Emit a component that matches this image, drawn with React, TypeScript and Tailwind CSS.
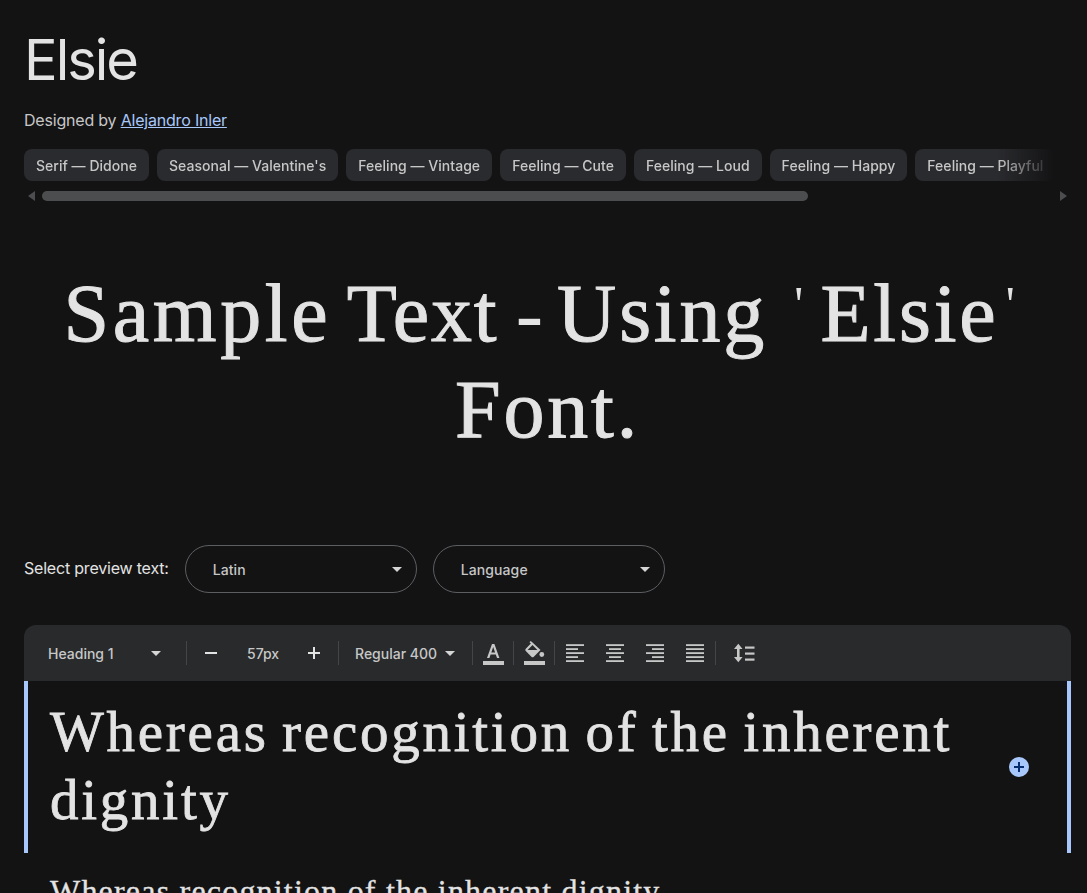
const chips = [
  "Serif — Didone",
  "Seasonal — Valentine's",
  "Feeling — Vintage",
  "Feeling — Cute",
  "Feeling — Loud",
  "Feeling — Happy",
  "Feeling — Playful",
  "Feeling — Calm",
];

const ui = "font-['Inter','Noto_Sans',sans-serif]";
const serif = "font-['Liberation_Serif',serif]";

function Caret({ className = "" }: { className?: string }) {
  return <span className={`h-0 w-0 shrink-0 border-x-[5px] border-t-[5px] border-x-transparent border-t-[#d5d5d5] ${className}`} />;
}

function Divider({ className = "" }: { className?: string }) {
  return <span className={`h-[24px] w-px shrink-0 bg-[#444547] ${className}`} />;
}

function Select({ label }: { label: string }) {
  return (
    <div className="flex h-[48px] w-[232px] items-center justify-between rounded-[24px] border border-[#5c5e61] pl-[27px] pr-[14px] text-[14px] font-medium text-[#c7c7c7]">
      <span className="tracking-[0.1px]">{label}</span>
      <Caret />
    </div>
  );
}

function AlignIcon({ rows }: { rows: [number, number][] }) {
  return (
    <svg width="20" height="20" viewBox="0 0 20 20" className="shrink-0">
      {rows.map(([x, w], i) => (
        <rect key={i} x={x} y={1.2 + i * 4} width={w} height="1.8" fill="#c7c7c7" />
      ))}
    </svg>
  );
}

export default function App() {
  return (
    <div className={`h-[893px] overflow-hidden bg-[#131314] ${ui} text-[#e3e3e3]`}>
      <div className="pl-[24px] pr-[16px] pt-[26px]">
        <h1 className="h-[68px] text-[56px] leading-[68px] font-normal tracking-[-2px]">Elsie</h1>
        <p className="mt-[16px] h-[20px] text-[16px] leading-[20px] tracking-[-0.2px] text-[#c7c7c7]">
          Designed by <a className="text-[#a8c7fa] underline">Alejandro Inler</a>
        </p>

        <div className="mt-[19px] flex h-[32px] gap-[8px] overflow-hidden [mask-image:linear-gradient(to_right,black_93%,transparent_98.5%)]">
          {chips.map((chip) => (
            <span
              key={chip}
              className="flex h-[32px] shrink-0 items-center rounded-[8px] bg-[#2a2b2e] px-[12px] text-[14px] font-medium tracking-[0.03px] whitespace-nowrap text-[#c7c7c7]"
            >
              {chip}
            </span>
          ))}
        </div>

        <div className="mt-[10px] flex h-[10px] items-center">
          <span className="ml-[4px] h-0 w-0 border-y-[5px] border-r-[7px] border-y-transparent border-r-[#4c4d4f]" />
          <span className="ml-[7px] h-[10px] w-[766px] rounded-full bg-[#4c4d4f]" />
          <span className="ml-auto mr-[4px] h-0 w-0 border-y-[5px] border-l-[7px] border-y-transparent border-l-[#4c4d4f]" />
        </div>
      </div>

      <div
        className={`mt-[65px] h-[192px] pl-[24px] pr-[16px] text-center text-[82px] leading-[96px] tracking-[2.8px] [word-spacing:-9px] [-webkit-text-stroke:1px_#e3e3e3] text-[#e3e3e3] ${serif}`}
      >
        <span className="mr-[1px] tracking-[3.65px]">Sample</span>{" "}
        <span className="mr-[3px] tracking-[1.8px]">Text</span>{" "}
        <span className="mr-[-3px] [-webkit-text-stroke:0]">-</span>{" "}
        Using{" "}
        <span className="relative -top-[20px] ml-[13px] text-[50px] leading-none [-webkit-text-stroke:0]">'</span>{" "}
        Elsie{" "}
        <span className="relative -top-[20px] -ml-[7px] mr-[14px] text-[50px] leading-none [-webkit-text-stroke:0]">'</span>{" "}
        Font.
      </div>

      <div className="mt-[87px] flex items-center px-[24px]">
        <span className="mr-[16px] -translate-y-[1px] text-[16px] tracking-[-0.2px] text-[#e3e3e3]">Select preview text:</span>
        <div className="flex gap-[16px]">
          <Select label="Latin" />
          <Select label="Language" />
        </div>
      </div>

      <div className="ml-[24px] mr-[16px] mt-[32px]">
        <div className="flex h-[56px] items-center rounded-t-[12px] bg-[#282a2c] text-[14px] font-medium tracking-[0] text-[#c7c7c7]">
          <span className="ml-[24px] w-[103px]">Heading 1</span>
          <Caret />
          <Divider className="ml-[25px]" />
          <span className="ml-[18px] h-[2px] w-[12px] shrink-0 bg-[#e3e3e3]" />
          <span className="ml-[30px] w-[32px] text-center">57px</span>
          <span className="relative ml-[29px] h-[12px] w-[12px] shrink-0">
            <span className="absolute top-[5px] left-0 h-[2px] w-[12px] bg-[#e3e3e3]" />
            <span className="absolute top-0 left-[5px] h-[12px] w-[2px] bg-[#e3e3e3]" />
          </span>
          <Divider className="ml-[18px]" />
          <span className="ml-[16px] w-[83px] whitespace-nowrap">Regular 400</span>
          <Caret className="ml-[7px]" />
          <Divider className="ml-[17px]" />
          <svg width="22" height="24" viewBox="0 0 22 24" className="ml-[9px] shrink-0">
            <path d="M5 17 10 3h2.4l5 14h-2.4l-1.2-3.5H8.6L7.4 17Zm4.3-5.5h3.8L11.2 6Z" fill="#c7c7c7" />
            <rect x="1" y="20" width="21" height="4" fill="#c7c7c7" />
          </svg>
          <Divider className="ml-[9px]" />
          <svg width="22" height="26" viewBox="0 0 22 26" className="ml-[10px] shrink-0">
            <path
              transform="translate(0 1)"
              fillRule="evenodd"
              d="M6.5 0 8 .9 16.5 9l-6.7 6.7a1.7 1.7 0 0 1-2.4 0l-5.6-5.6a1.7 1.7 0 0 1 0-2.4L6.9 2.6 5.5 1.2Zm2 4.1L3.6 9h9.8Z"
              fill="#c7c7c7"
            />
            <circle cx="17.8" cy="14.5" r="2.4" fill="#c7c7c7" />
            <rect x="0" y="21" width="21" height="4" fill="#c7c7c7" />
          </svg>
          <Divider className="ml-[8px]" />
          <span className="ml-[10px] flex gap-[20px]">
            <AlignIcon rows={[[1, 18], [1, 12], [1, 18], [1, 12], [1, 18]]} />
            <AlignIcon rows={[[1, 18], [4, 12], [1, 18], [4, 12], [1, 18]]} />
            <AlignIcon rows={[[1, 18], [7, 12], [1, 18], [7, 12], [1, 18]]} />
            <AlignIcon rows={[[1, 18], [1, 18], [1, 18], [1, 18], [1, 18]]} />
          </span>
          <Divider className="ml-[10px]" />
          <svg width="22" height="20" viewBox="0 0 22 20" className="ml-[17px] shrink-0">
            <path d="M5.3.8 1 6h3v8H1l4.3 5.2L9.6 14h-3V6h3Z" fill="#c7c7c7" />
            <rect x="12" y="3.5" width="9.5" height="2.2" fill="#c7c7c7" />
            <rect x="12" y="9.5" width="9.5" height="2.2" fill="#c7c7c7" />
            <rect x="12" y="15.5" width="9.5" height="2.2" fill="#c7c7c7" />
          </svg>
        </div>

        <div className={`flex h-[172px] items-center border-x-[4px] border-[#a8c7fa] pl-[22px] pr-[38px] ${serif}`}>
          <div className="w-[940px] pb-[2px] text-[57px] leading-[68px] tracking-[2.75px] [word-spacing:-3.5px] [-webkit-text-stroke:0.8px_#e3e3e3] text-[#e3e3e3]">
            Whereas recognition of the inherent dignity
          </div>
          <span className="relative ml-auto h-[20px] w-[20px] shrink-0 rounded-full bg-[#a8c7fa]">
            <span className="absolute top-[9px] left-[5px] h-[2px] w-[10px] bg-[#062e6f]" />
            <span className="absolute top-[5px] left-[9px] h-[10px] w-[2px] bg-[#062e6f]" />
          </span>
        </div>

        <div className={`mt-[16px] pl-[26px] text-[32px] leading-[44px] tracking-[1.2px] [-webkit-text-stroke:0.3px_#e3e3e3] whitespace-nowrap text-[#e3e3e3] ${serif}`}>
          Whereas recognition of the inherent dignity
        </div>
      </div>
    </div>
  );
}
